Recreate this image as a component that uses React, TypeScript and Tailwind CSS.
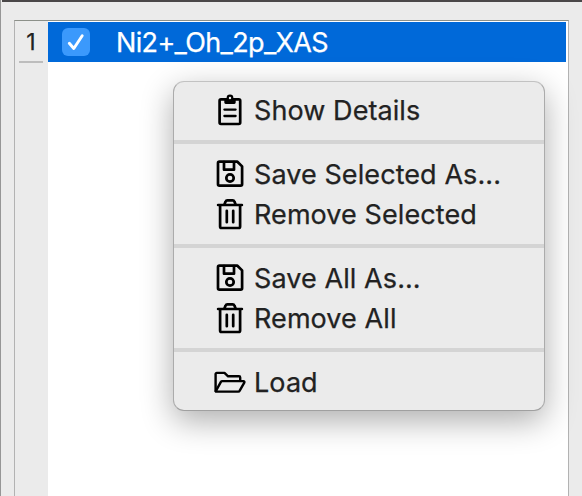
import type { ReactNode } from "react";

function Icon({ children, width = 2.7 }: { children: ReactNode; width?: number }) {
  return (
    <svg className="size-8 shrink-0" viewBox="0 0 32 32" fill="none" stroke="#000" strokeWidth={width} strokeLinecap="round" strokeLinejoin="round">
      {children}
    </svg>
  );
}

const ClipboardIcon = () => (
  <Icon>
    <rect x="5.6" y="5.4" width="20.6" height="24.6" rx="1.4" />
    <path d="M10.3 5h11.4v3.6a1.4 1.4 0 0 1-1.4 1.4h-8.6a1.4 1.4 0 0 1-1.4-1.4z" fill="#000" stroke="none" />
    <circle cx="16" cy="4" r="2.3" fill="#ececec" strokeWidth="2.2" />
    <path d="M11.8 6.4h8.4v2h-8.4z" fill="#000" stroke="none" />
    <path d="M10.4 15.6h11.2M10.4 22h11.2" strokeWidth="2.3" />
  </Icon>
);

const SaveIcon = () => (
  <Icon>
    <path d="M5.4 3.7h18l4.7 4.7v17.9a1.4 1.4 0 0 1-1.4 1.4H5.4A1.4 1.4 0 0 1 4 26.3V5.1a1.4 1.4 0 0 1 1.4-1.4z" />
    <path d="M10 4v7.7h10V4" />
    <circle cx="16" cy="20" r="3.7" />
  </Icon>
);

const TrashIcon = () => (
  <Icon>
    <path d="M4.1 7h23.8M6.1 7.2v21.2a1.6 1.6 0 0 0 1.6 1.6h16.8a1.6 1.6 0 0 0 1.6-1.6V7.2" />
    <path d="M10.4 6.6l1.2-3a2 2 0 0 1 1.8-1.3h5.2a2 2 0 0 1 1.8 1.3l1.2 3" />
    <path d="M12.8 12.8v11.4M19.2 12.8v11.4" />
  </Icon>
);

const FolderIcon = () => (
  <Icon width={2.4}>
    <path d="M1.6 25V8.1A1.2 1.2 0 0 1 2.8 6.9h7.7l3.6 3.4H25a1.2 1.2 0 0 1 1.2 1.2v3.2" />
    <path d="M1.8 25.2l5.1-9.3a1.6 1.6 0 0 1 1.4-.8h21.1a1 1 0 0 1 .9 1.5l-4.6 8.1a1.7 1.7 0 0 1-1.5.9H2.3a.4.4 0 0 1-.5-.4z" />
  </Icon>
);

function Item({ icon, label }: { icon: ReactNode; label: string }) {
  return (
    <div className="flex h-10 items-center pl-10">
      {icon}
      <span className="ml-2 whitespace-nowrap pt-0.5 text-[27px] leading-10 tracking-[0.08px] text-[#222] [-webkit-text-stroke:0.25px_#222]">
        {label}
      </span>
    </div>
  );
}

const Separator = () => (
  <div className="py-2.5">
    <div className="h-1 bg-[#d4d4d4]" />
  </div>
);

export default function App() {
  return (
    <div className="relative flex h-[496px] w-[582px] flex-col overflow-hidden border-l border-[#969696] bg-[#ebebeb] font-['Inter',sans-serif]">
      <div className="ml-px h-0.5 shrink-0 bg-[#4a4748]" />
      <div className="ml-[13px] mt-[18px] flex w-[555px] flex-1 border-x border-t border-x-[#b2b2b2] border-t-[#8c9089]">
        <div className="w-[33px] shrink-0 px-1">
          <div className="h-10 pr-px pt-px text-center text-[23px] leading-10 text-[#222] [-webkit-text-stroke:0.25px_#222]">1</div>
          <div className="h-0.5 w-6 bg-[#bdbdbd]" />
        </div>
        <div className="flex-1 bg-white pt-px">
          <div className="mr-0.5 flex h-10 items-center bg-[#0069d9] pl-3.5">
            <div className="size-7 rounded-md bg-[#3b99fc]">
              <svg viewBox="0 0 28 28" fill="none" stroke="#fff" strokeWidth="2.9" strokeLinecap="round" strokeLinejoin="round">
                <path d="M7.3 15.3l4.5 5.2L20.2 7.8" />
              </svg>
            </div>
            <span className="ml-[26px] whitespace-nowrap pt-0.5 text-[27px] leading-10 tracking-[-0.65px] text-white [-webkit-text-stroke:0.25px_white]">
              Ni2+_Oh_2p_XAS
            </span>
          </div>
        </div>
      </div>
      <div className="absolute left-[172px] top-[81px] w-[372px] rounded-[11px] border border-[#ababab] border-t-[#c2c2c2] border-b-[#a0a0a0] bg-[#ebebeb] py-2 shadow-[0_10px_32px_rgba(0,0,0,0.32)]">
        <Item icon={<ClipboardIcon />} label="Show Details" />
        <Separator />
        <Item icon={<SaveIcon />} label="Save Selected As..." />
        <Item icon={<TrashIcon />} label="Remove Selected" />
        <Separator />
        <Item icon={<SaveIcon />} label="Save All As..." />
        <Item icon={<TrashIcon />} label="Remove All" />
        <Separator />
        <Item icon={<FolderIcon />} label="Load" />
      </div>
    </div>
  );
}
